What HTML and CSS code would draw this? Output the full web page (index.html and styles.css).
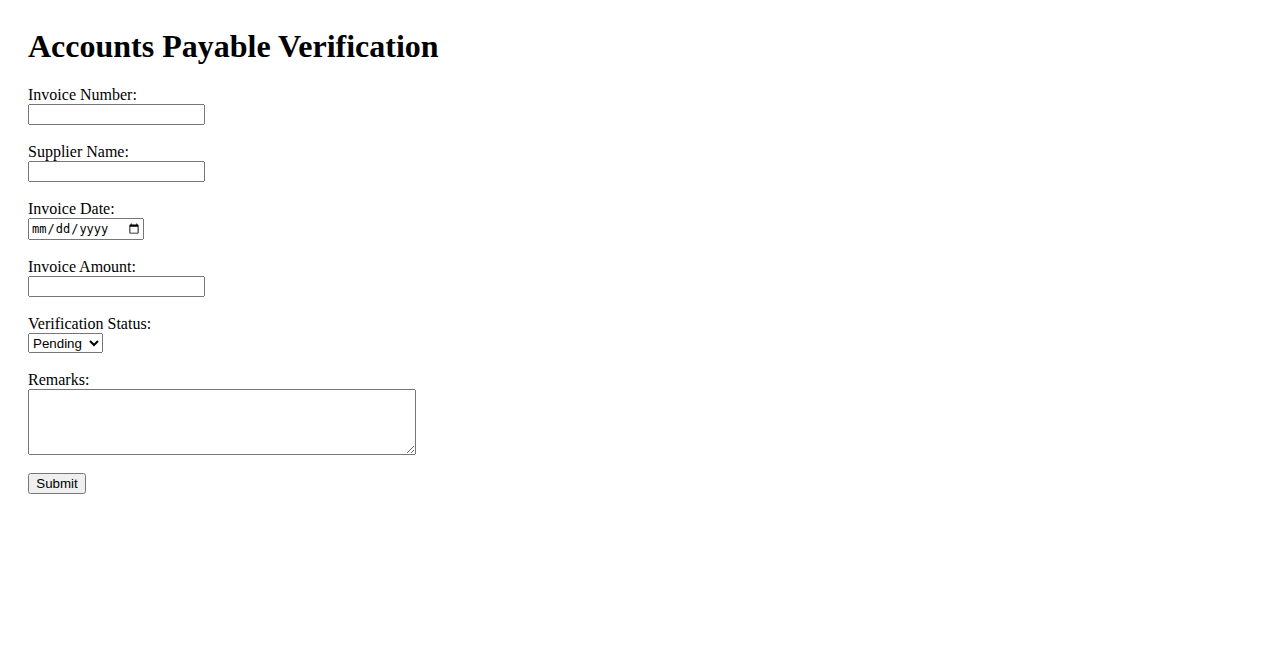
FILE: index.html
```html
<!DOCTYPE html>
<html>
<head>
<meta charset="utf-8">
<title>Accounts Payable Verification</title>
<link rel="stylesheet" href="styles.css">
</head>
<body>
<div class="page">
<h1 class="title">Accounts Payable Verification</h1>
<form class="form">
<label for="inv">Invoice Number:</label><br>
<input type="text" id="inv" class="field"><br><br>
<label for="sup">Supplier Name:</label><br>
<input type="text" id="sup" class="field"><br><br>
<label for="dt">Invoice Date:</label><br>
<input type="date" id="dt" class="date"><br><br>
<label for="amt">Invoice Amount:</label><br>
<input type="number" id="amt" class="field"><br><br>
<label for="st">Verification Status:</label><br>
<select id="st" class="status"><option>Pending</option><option>Verified</option><option>Rejected</option></select><br><br>
<label for="rm">Remarks:</label><br>
<textarea id="rm" class="remarks" rows="4" cols="50"></textarea><br><br>
<input type="submit" value="Submit" class="submit">
</form>
</div>
</body>
</html>
```
FILE: styles.css
```css
body {
  margin: 8px;
  font-family: "Liberation Serif", "Times New Roman", serif;
  font-size: 16px;
  color: #000;
  background: #fff;
}
.page {
  padding: 20px;
}
.title {
  font-size: 32px;
  font-weight: bold;
  margin: 0 0 21px 0;
}
.field {
  width: 177px;
  height: 21px;
  box-sizing: border-box;
}
.date {
  width: 116px;
  height: 22px;
  box-sizing: border-box;
  font-size: 12px;
}
.status {
  height: 20px;
  vertical-align: top;
}
.remarks {
  width: 388px;
  height: 66px;
  box-sizing: border-box;
  vertical-align: bottom;
}
.submit {
  width: 58px;
  height: 21px;
  box-sizing: border-box;
}
```
